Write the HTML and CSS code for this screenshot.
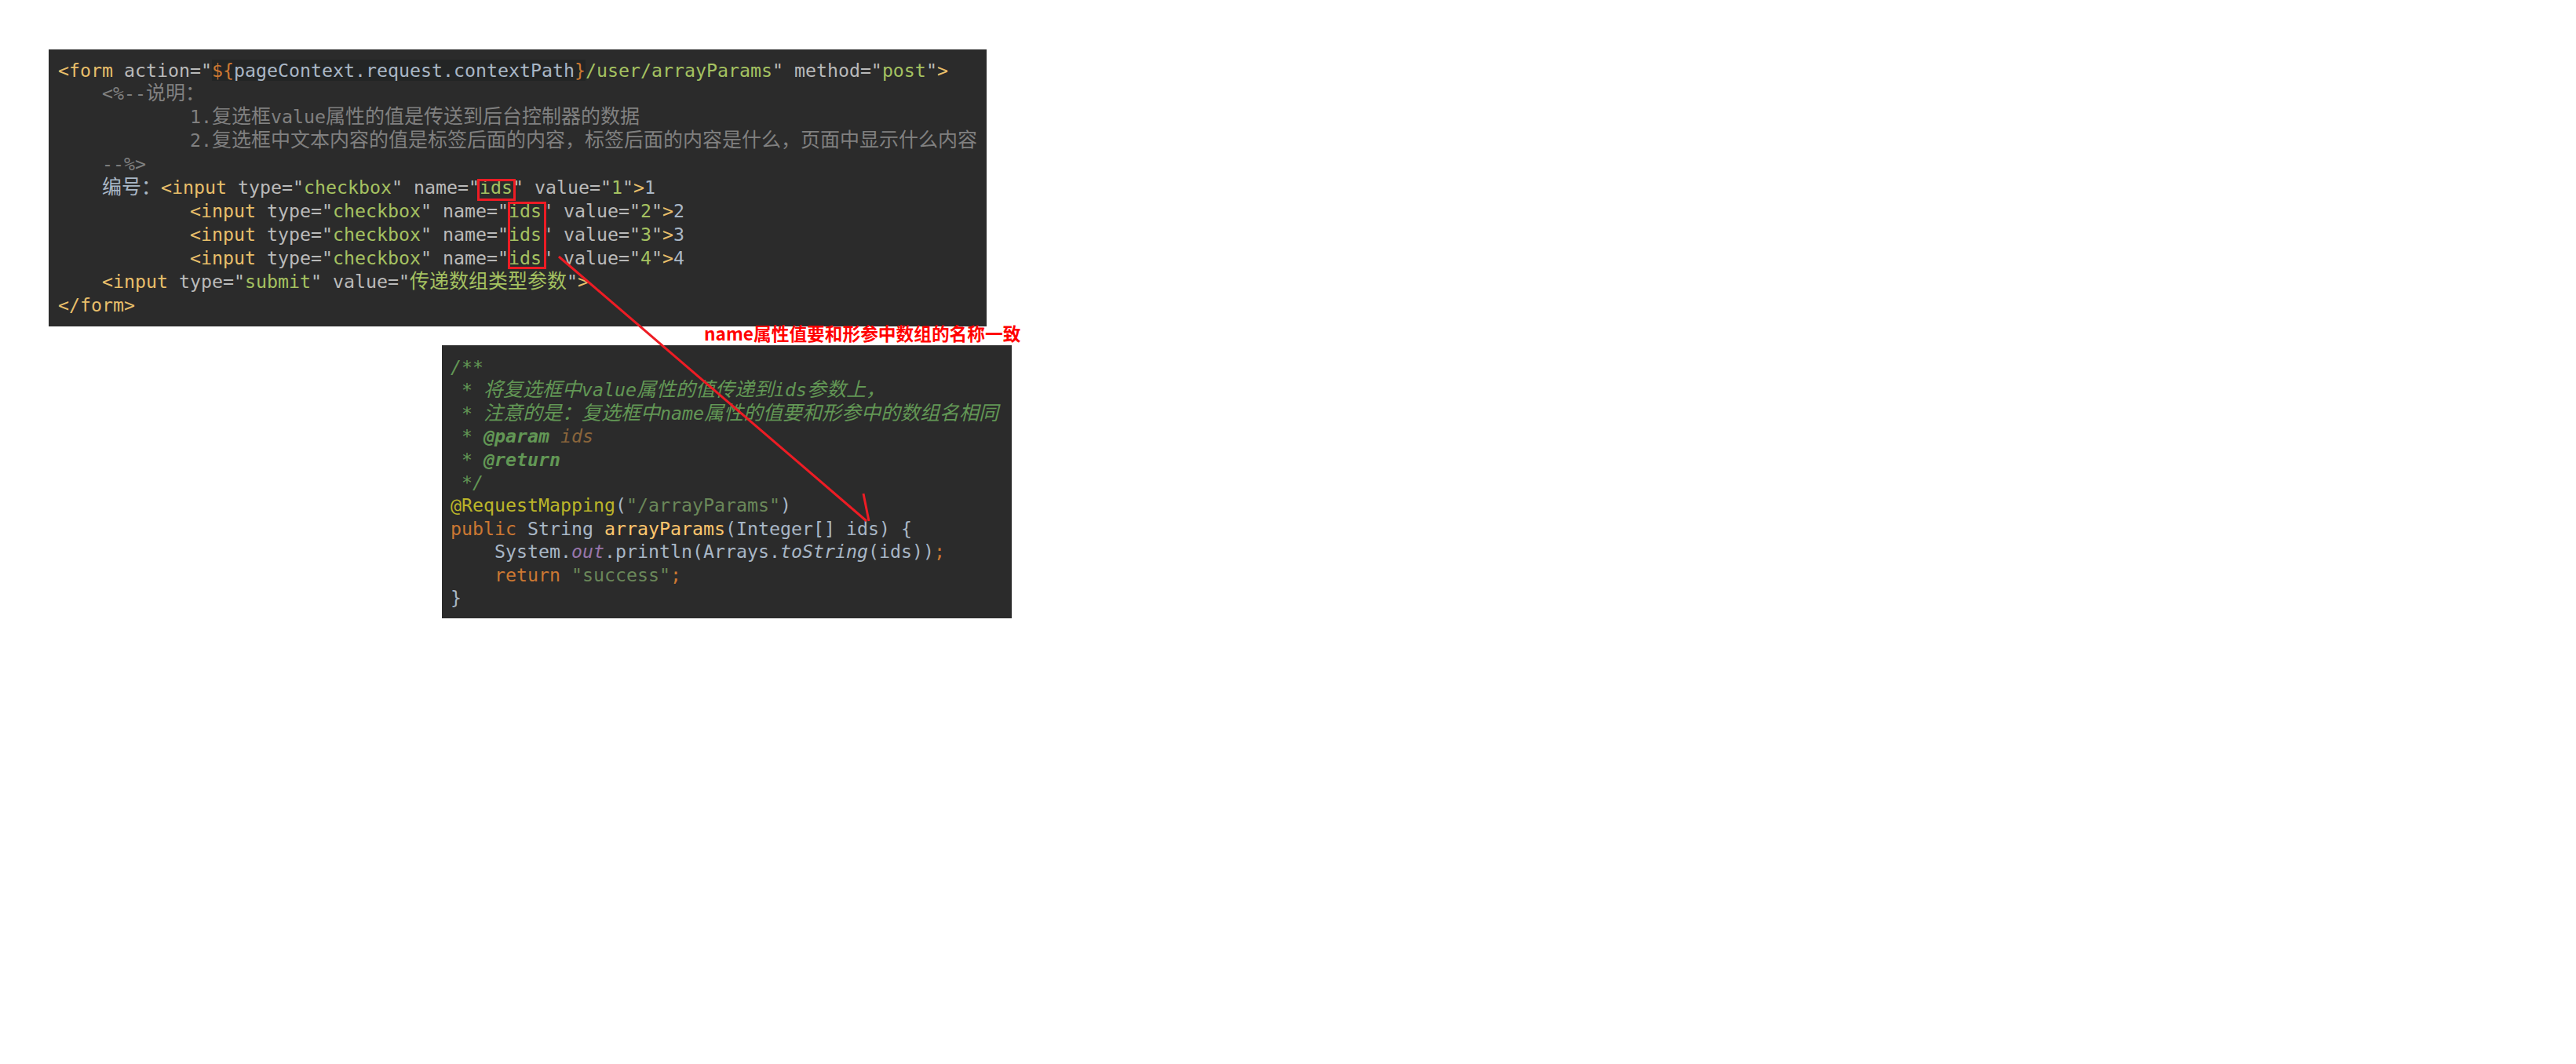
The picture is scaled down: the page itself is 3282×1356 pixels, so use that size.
FILE: index.html
```html
<!DOCTYPE html>
<html lang="zh-CN">
<head>
  <meta charset="UTF-8">
  <meta name="viewport" content="width=device-width, initial-scale=1.0">
  <title>数组类型参数</title>
  <link rel="stylesheet" href="styles.css">
</head>
<body>
  <div class="page">
    <!-- JSP 表单 -->
<pre class="code code-jsp"><span class="tag">&lt;form</span> <span class="attr">action="</span><span class="el-band"><span class="el">${</span><span class="txt">pageContext.request.contextPath</span><span class="el">}</span></span><span class="val">/user/arrayParams</span><span class="attr">"</span> <span class="attr">method="</span><span class="val">post</span><span class="attr">"</span><span class="tag">&gt;</span>
    <span class="jsp">&lt;%--<span class="zh">说明：</span></span>
            <span class="jsp">1.<span class="zh">复选框</span>value<span class="zh">属性的值是传送到后台控制器的数据</span></span>
            <span class="jsp">2.<span class="zh">复选框中文本内容的值是标签后面的内容，标签后面的内容是什么，页面中显示什么内容</span></span>
    <span class="jsp">--%&gt;</span>
    <span class="txt zh">编号：</span><span class="tag">&lt;input</span> <span class="attr">type="</span><span class="val">checkbox</span><span class="attr">" name="</span><span class="val">ids</span><span class="attr">" value="</span><span class="val">1</span><span class="attr">"</span><span class="tag">&gt;</span><span class="txt">1</span>
            <span class="tag">&lt;input</span> <span class="attr">type="</span><span class="val">checkbox</span><span class="attr">" name="</span><span class="val">ids</span><span class="attr">" value="</span><span class="val">2</span><span class="attr">"</span><span class="tag">&gt;</span><span class="txt">2</span>
            <span class="tag">&lt;input</span> <span class="attr">type="</span><span class="val">checkbox</span><span class="attr">" name="</span><span class="val">ids</span><span class="attr">" value="</span><span class="val">3</span><span class="attr">"</span><span class="tag">&gt;</span><span class="txt">3</span>
            <span class="tag">&lt;input</span> <span class="attr">type="</span><span class="val">checkbox</span><span class="attr">" name="</span><span class="val">ids</span><span class="attr">" value="</span><span class="val">4</span><span class="attr">"</span><span class="tag">&gt;</span><span class="txt">4</span>
    <span class="tag">&lt;input</span> <span class="attr">type="</span><span class="val">submit</span><span class="attr">" value="</span><span class="val zh">传递数组类型参数</span><span class="attr">"</span><span class="tag">&gt;</span>
<span class="tag">&lt;/form&gt;</span></pre>

    <!-- 控制器方法 -->
<pre class="code code-java"><span class="doc">/**
 * <span class="zh">将复选框中</span>value<span class="zh">属性的值传递到</span>ids<span class="zh">参数上，</span>
 * <span class="zh">注意的是：复选框中</span>name<span class="zh">属性的值要和形参中的数组名相同</span>
 * <b>@param</b> <span class="doc-val">ids</span>
 * <b>@return</b>
 */</span>
<span class="ann">@RequestMapping</span>(<span class="str">"/arrayParams"</span>)
<span class="kw">public</span> String <span class="fn">arrayParams</span>(Integer[] ids) {
    System.<span class="fld">out</span>.println(Arrays.<i>toString</i>(ids))<span class="kw">;</span>
    <span class="kw">return</span> <span class="str">"success"</span><span class="kw">;</span>
}</pre>

    <div class="note">name属性值要和形参中数组的名称一致</div>

    <svg class="marks" width="1320" height="820" viewBox="0 0 1320 820">
      <rect x="609.5" y="229.5" width="46" height="25" fill="none" stroke="#ed1c24" stroke-width="3"/>
      <rect x="648.5" y="258.5" width="46" height="83" fill="none" stroke="#ed1c24" stroke-width="3"/>
      <line x1="712" y1="327" x2="1104" y2="664" stroke="#ed1c24" stroke-width="3"/>
      <line x1="1100" y1="629" x2="1107" y2="664" stroke="#ed1c24" stroke-width="3"/>
    </svg>
  </div>
</body>
</html>
```

FILE: styles.css
```css
body {
  margin: 0;
  background-color: #fff;
}

.page {
  position: relative;
  padding: 63px 0 0 62px;
}

.code {
  margin: 0;
  box-sizing: border-box;
  background-color: #2b2b2b;
  color: #a9b7c6;
  font-family: "DejaVu Sans Mono", "Noto Sans CJK SC", monospace;
  font-size: 23.25px;
  line-height: 29.9px;
  white-space: pre;
}

.code-jsp {
  width: 1195px;
  height: 353px;
  padding: 11.5px 0 0 12px;
}

.code-java {
  width: 726px;
  height: 348px;
  margin: 24px 0 0 501px;
  padding: 13px 0 0 11px;
  line-height: 29.4px;
}

.zh {
  font-family: "Noto Sans CJK SC", sans-serif;
  font-size: 25px;
  line-height: 0;
}

/* JSP */
.tag {
  color: #e8bf6a;
}

.attr {
  color: #bababa;
}

.val {
  color: #a5c261;
}

.el {
  color: #cc7832;
}

.el-band {
  background-color: #232525;
}

.txt {
  color: #a9b7c6;
}

.jsp {
  color: #808080;
}

/* Java */
.doc {
  color: #629755;
  font-style: italic;
}

.doc b {
  font-weight: bold;
}

.doc-val {
  color: #8a653b;
}

.ann {
  color: #bbb529;
}

.str {
  color: #6a8759;
}

.kw {
  color: #cc7832;
}

.fn {
  color: #ffc66d;
}

.fld {
  color: #9876aa;
  font-style: italic;
}

.code-java i {
  font-style: italic;
}

.note {
  position: absolute;
  left: 897px;
  top: 413px;
  color: #ff0000;
  font-family: "Noto Sans CJK SC", sans-serif;
  font-size: 22.7px;
  font-weight: bold;
  line-height: 23px;
  white-space: nowrap;
}

.marks {
  position: absolute;
  left: 0;
  top: 0;
  pointer-events: none;
}
```
